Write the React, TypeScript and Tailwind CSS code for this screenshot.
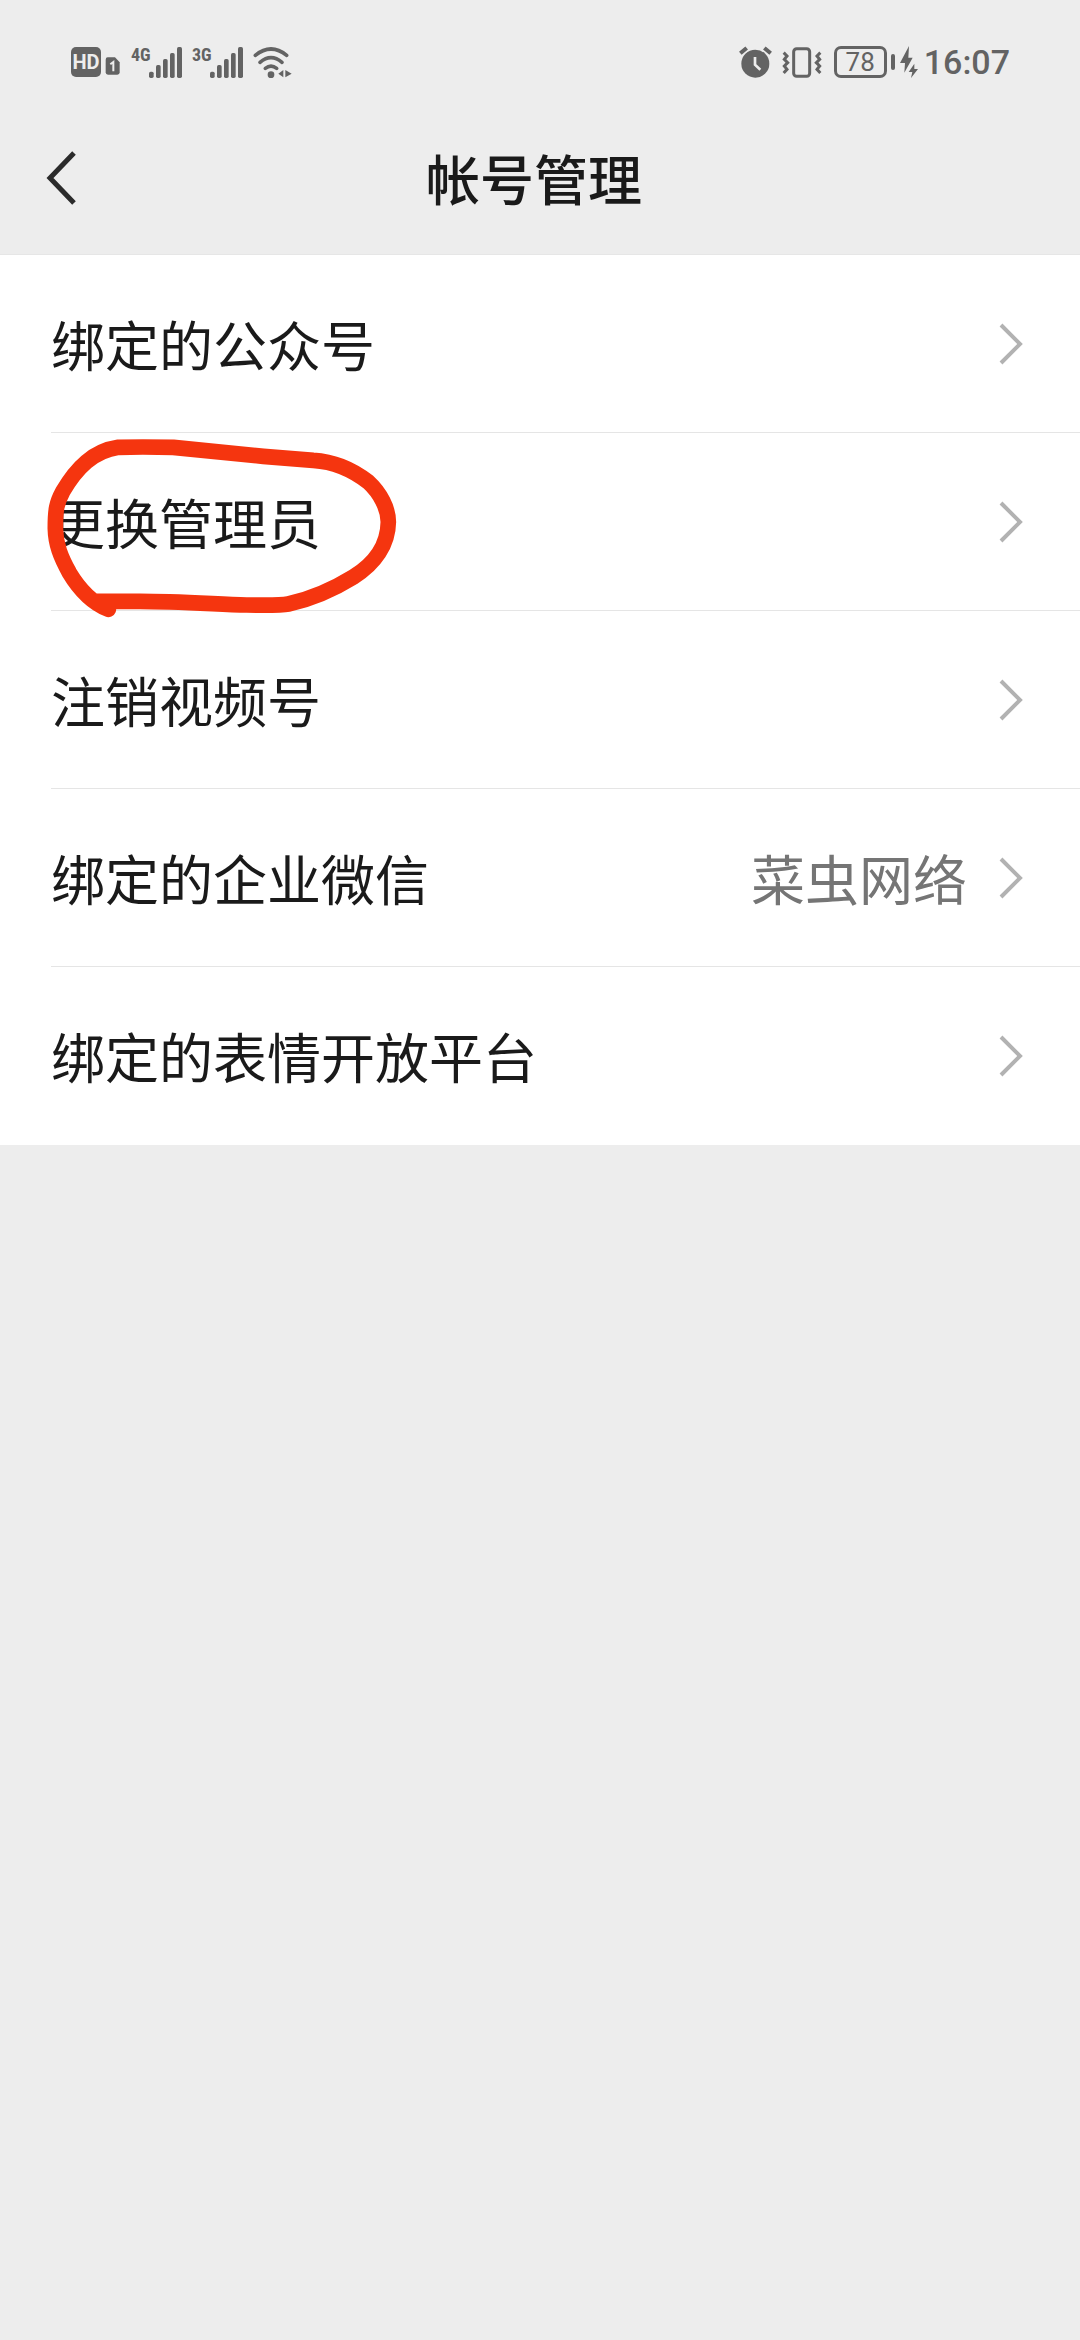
interface MenuItem {
  label: string;
  value?: string;
  circled?: boolean;
}

const menuItems: MenuItem[] = [
  { label: "绑定的公众号" },
  { label: "更换管理员", circled: true },
  { label: "注销视频号" },
  { label: "绑定的企业微信", value: "菜虫网络" },
  { label: "绑定的表情开放平台" },
];

function SignalBars() {
  return (
    <svg className="w-[34px] h-[31px]" viewBox="0 0 102 93" fill="currentColor">
      <rect x="0" y="74" width="14" height="19" rx="5" />
      <rect x="21" y="54" width="14" height="39" rx="5" />
      <rect x="42" y="36" width="14" height="57" rx="5" />
      <rect x="63" y="18" width="14" height="75" rx="5" />
      <rect x="84" y="0" width="15" height="93" rx="5" />
    </svg>
  );
}

function NetworkSignal({ type }: { type: string }) {
  return (
    <div className="flex items-start">
      <span className="w-[18px] text-[18px] leading-[16px] font-bold font-['Roboto_Condensed','Liberation_Sans_Narrow','Roboto',sans-serif]">
        {type}
      </span>
      <SignalBars />
    </div>
  );
}

function StatusBar() {
  return (
    <div className="flex h-[124px] items-center justify-between pl-[71px] pr-[70px] text-[#636363]">
      <div className="flex items-center">
        <span className="flex h-[30px] w-[30px] items-center justify-center rounded-[5px] bg-[#636363] text-[20px] font-bold text-[#ededed]">
          HD
        </span>
        <svg className="ml-1 mt-2 h-[18px] w-[15px]" viewBox="0 0 45 54">
          <path d="M8 1H30L44 16V46Q44 53 37 53H9Q2 53 2 46V8Q2 1 8 1Z" fill="currentColor" />
          <path d="M16 22L25 15V43" fill="none" stroke="#ededed" strokeWidth="6" />
        </svg>
        <div className="ml-[11px] flex gap-[9px]">
          <NetworkSignal type="4G" />
          <NetworkSignal type="3G" />
        </div>
        <svg className="ml-[9px] h-[31px] w-[39px]" viewBox="0 0 117 93" fill="none" stroke="currentColor" strokeWidth="11" strokeLinecap="round">
          <path d="M7 25Q54 -13 101 25" />
          <path d="M21 46Q54 18 87 46" />
          <path d="M37 64Q54 51 71 64" />
          <circle cx="54" cy="83" r="10" fill="currentColor" stroke="none" />
          <path d="M91 69V91L76 80ZM97 69V91L116 80Z" fill="currentColor" stroke="none" />
        </svg>
      </div>

      <div className="flex items-center">
        <svg className="h-[32px] w-[33px]" viewBox="0 0 99 96" fill="none" stroke="currentColor">
          <circle cx="49" cy="53" r="42" fill="currentColor" stroke="none" />
          <path d="M4 22L23 6M76 6L95 22" strokeWidth="12" />
          <path d="M48 33V56L64 71" stroke="#ededed" strokeWidth="8" />
        </svg>
        <svg className="ml-[10px] h-[31px] w-[40px]" viewBox="0 0 120 93" fill="none" stroke="currentColor" strokeWidth="9">
          <rect x="35" y="5" width="48" height="83" rx="9" />
          <path d="M5 17L15 27L7 37L17 47L7 57L15 67L5 78" />
          <path d="M115 17L105 27L113 37L103 47L113 57L105 67L115 78" />
        </svg>
        <div className="ml-3 flex items-center gap-1">
          <span className="flex h-[32px] w-[53px] items-center justify-center rounded-[7px] border-[3px] border-[#636363] text-[26px]">
            78
          </span>
          <span className="h-[16px] w-[4px] rounded-sm bg-[#636363]" />
        </div>
        <svg className="ml-[5px] h-[32px] w-[18px]" viewBox="0 0 54 96" fill="currentColor">
          <path d="M27 0L0 51H15L13 80L38 35H25Z" />
          <path d="M43 53L26 78H37L33 96L54 69H43Z" />
        </svg>
        <span className="ml-1.5 text-[34px] leading-none font-medium">16:07</span>
      </div>
    </div>
  );
}

function MarkerCircle() {
  return (
    <svg
      className="pointer-events-none absolute left-[30px] top-[-12px] z-10 h-[210px] w-[400px]"
      viewBox="0 0 1200 630"
      fill="none"
      stroke="#f5350f"
      strokeWidth="47"
      strokeLinecap="round"
      strokeLinejoin="round"
    >
      <path d="M235 565C185 545 145 500 118 455C92 408 77 370 76 322C76 265 80 245 98 212C140 140 190 90 265 79Q330 77 430 79L700 106L850 118C920 122 970 148 1015 183C1050 215 1075 262 1075 303C1074 370 1035 428 970 468C910 505 840 535 775 549C750 554 700 553 650 552C540 548 430 541 330 541H200" />
    </svg>
  );
}

export default function App() {
  return (
    <div className="min-h-screen bg-[#ededed] font-['Roboto','Noto_Sans_CJK_SC',sans-serif] text-[#1a1a1a]">
      <header className="border-b border-[#e6e6e6]">
        <StatusBar />
        <div className="grid h-[130px] grid-cols-[120px_1fr_132px] items-center pb-[22px]">
          <button type="button" aria-label="返回" className="flex h-full items-center pl-[46px]">
            <svg className="h-[54px] w-[30px]" viewBox="0 0 30 54" fill="none" stroke="#2b2b2b" strokeWidth="5">
              <path d="M28 2L4 27L28 52" />
            </svg>
          </button>
          <h1 className="text-center text-[54px] font-medium leading-[80px] font-['Noto_Sans_CJK_SC',sans-serif]">
            帐号管理
          </h1>
        </div>
      </header>

      <ul className="bg-white font-['Noto_Sans_CJK_SC',sans-serif]">
        {menuItems.map((item, index) => (
          <li key={item.label} className="relative pl-[51px]">
            <a
              href="#"
              className={`flex h-[178px] items-center pr-[56px] text-[54px] leading-[80px] ${
                index < menuItems.length - 1 ? "border-b border-[#e5e5e5]" : ""
              }`}
            >
              <span className="flex-1">{item.label}</span>
              {item.value && <span className="mr-[32px] text-[#757575]">{item.value}</span>}
              <svg className="h-[42px] w-[25px]" viewBox="0 0 25 42" fill="none" stroke="#b2b2b2" strokeWidth="4">
                <path d="M2 2L21 21L2 40" />
              </svg>
            </a>
            {item.circled && <MarkerCircle />}
          </li>
        ))}
      </ul>
    </div>
  );
}
